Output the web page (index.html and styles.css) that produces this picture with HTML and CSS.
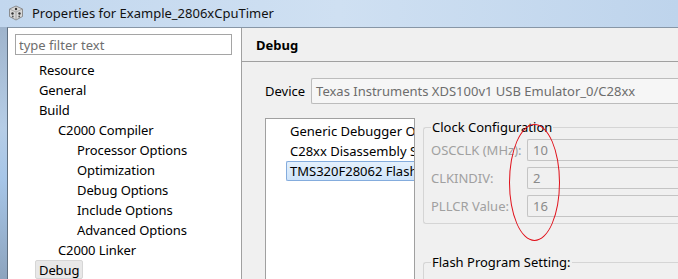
FILE: index.html
```html
<!DOCTYPE html>
<html lang="en">
<head>
    <meta charset="UTF-8">
    <title>Properties for Example_2806xCpuTimer</title>
    <link rel="stylesheet" href="styles.css">
</head>
<body>
    <div class="window">
        <div class="titlebar">
            <svg class="app-icon" width="16" height="16" viewBox="0 0 16 16">
                <path d="M8 1 L14.5 4 L14.5 11.5 L8 15 L1.5 11.5 L1.5 4 Z" fill="#d8d8d8" stroke="#7a7a7a" stroke-width="0.8"/>
                <path d="M1.5 4 L8 7 L14.5 4 M8 7 L8 15" fill="none" stroke="#9a9a9a" stroke-width="0.8"/>
                <circle cx="8" cy="4" r="1.2" fill="#333"/>
                <circle cx="4.5" cy="8.5" r="1.2" fill="#333"/>
                <circle cx="11.5" cy="8.5" r="1.2" fill="#333"/>
                <circle cx="4.8" cy="11.5" r="0.9" fill="#555"/>
                <circle cx="11.2" cy="11.5" r="0.9" fill="#555"/>
            </svg>
            <span class="title">Properties for Example_2806xCpuTimer</span>
        </div>

        <div class="frame">
            <div class="content">
                <!-- left: page tree -->
                <div class="sidebar">
                    <input class="filter" type="text" placeholder="type filter text">
                    <ul class="tree">
                        <li class="lvl1">Resource</li>
                        <li class="lvl1">General</li>
                        <li class="lvl1">Build</li>
                        <li class="lvl2">C2000 Compiler</li>
                        <li class="lvl3">Processor Options</li>
                        <li class="lvl3">Optimization</li>
                        <li class="lvl3">Debug Options</li>
                        <li class="lvl3">Include Options</li>
                        <li class="lvl3">Advanced Options</li>
                        <li class="lvl2">C2000 Linker</li>
                        <li class="lvl1"><span class="selected">Debug</span></li>
                    </ul>
                </div>

                <!-- right: page -->
                <div class="page">
                    <div class="page-header">Debug</div>
                    <div class="page-body">
                        <div class="device-row">
                            <label>Device</label>
                            <div class="device-box">Texas Instruments XDS100v1 USB Emulator_0/C28xx</div>
                        </div>

                        <div class="split">
                            <ul class="category-list">
                                <li>Generic Debugger O</li>
                                <li>C28xx Disassembly S</li>
                                <li class="active">TMS320F28062 Flash</li>
                            </ul>

                            <div class="settings">
                                <fieldset class="group">
                                    <legend>Clock Configuration</legend>
                                    <div class="field-grid">
                                        <span class="field-label">OSCCLK (MHz):</span>
                                        <div class="field-box">10</div>
                                        <span class="field-label">CLKINDIV:</span>
                                        <div class="field-box">2</div>
                                        <span class="field-label">PLLCR Value:</span>
                                        <div class="field-box">16</div>
                                    </div>
                                    <div class="mark"></div>
                                </fieldset>

                                <fieldset class="group flash">
                                    <legend>Flash Program Setting:</legend>
                                </fieldset>
                            </div>
                        </div>
                    </div>
                </div>
            </div>
        </div>
    </div>
</body>
</html>
```

FILE: styles.css
```css
* {
    box-sizing: border-box;
}

body {
    margin: 0;
    width: 678px;
    height: 279px;
    overflow: hidden;
    font-family: "Noto Sans", "Open Sans", sans-serif;
    font-size: 13px;
    color: #000;
}

.window {
    display: flex;
    flex-direction: column;
    height: 279px;
    background: linear-gradient(to bottom, #c9dcf0, #b9d1ea);
}

.titlebar {
    height: 27px;
    flex-shrink: 0;
    display: flex;
    align-items: center;
    padding-left: 8px;
    background: linear-gradient(to right, #c2d7ee 0%, #cfe0f2 50%, #bed4ec 100%);
}

.app-icon {
    margin-right: 8px;
    margin-top: -1px;
}

.title {
    font-size: 13px;
    color: #111;
    margin-top: -2px;
}

.frame {
    flex: 1;
    min-height: 0;
    overflow: hidden;
    display: flex;
    padding-left: 7px;
    background: linear-gradient(to bottom, #9fb4cc 0%, #b6cde6 40%, #a7c6e8 60%, #8da4be 100%);
}

.content {
    flex: 1;
    display: flex;
    align-items: flex-start;
    border-left: 1px solid #5f6f80;
    border-top: 1px solid #8796a6;
    background: #f0f0f0;
}

/* left tree */
.sidebar {
    width: 234px;
    height: 300px;
    flex-shrink: 0;
    background: #fff;
    border-right: 1px solid #a0a0a0;
    padding: 6px 0 0 7px;
}

.filter {
    width: 217px;
    height: 21px;
    border: 1px solid #a5a5a5;
    padding: 0 3px;
    font-family: inherit;
    font-size: 13px;
    outline: none;
}

.filter::placeholder {
    color: #6e6e6e;
}

.tree {
    list-style: none;
    margin: 5px 0 0;
    padding: 0;
}

.tree li {
    height: 20px;
    line-height: 20px;
    white-space: nowrap;
    letter-spacing: -0.1px;
}

.lvl1 { padding-left: 24px; }
.lvl2 { padding-left: 43px; }
.lvl3 { padding-left: 62px; }

.tree .selected {
    display: inline-block;
    margin-left: -4px;
    padding: 0 3px;
    height: 19px;
    line-height: 18px;
    background: #e8e8e8;
    border: 1px solid #d6d6d6;
    border-radius: 2px;
}

/* right page */
.page {
    flex: 1;
    display: flex;
    flex-direction: column;
    min-width: 0;
}

.page-header {
    height: 34px;
    line-height: 34px;
    padding-left: 14px;
    font-weight: bold;
    border-bottom: 1px solid #a0a0a0;
    flex-shrink: 0;
}

.page-body {
    padding: 16px 0 0 23px;
}

.device-row {
    display: flex;
    align-items: center;
    height: 26px;
}

.device-row label {
    margin-right: 6px;
}

.device-box {
    flex: 1;
    height: 26px;
    line-height: 24px;
    padding-left: 4px;
    background: #f6f6f6;
    border: 1px solid #bcbcbc;
    border-right: none;
    border-radius: 2px 0 0 2px;
    color: #6d6d6d;
    white-space: nowrap;
    overflow: hidden;
}

.split {
    display: flex;
    margin-top: 14px;
    gap: 8px;
}

.category-list {
    list-style: none;
    margin: 0;
    padding: 2px 0 0 20px;
    width: 150px;
    height: 170px;
    background: #fff;
    border: 1px solid #a0a0a0;
    flex-shrink: 0;
}

.category-list li {
    height: 20px;
    line-height: 20px;
    padding-left: 4px;
    white-space: nowrap;
    overflow: hidden;
}

.category-list .active {
    background: linear-gradient(to bottom, #e4f0fc, #cfe4fa);
    border: 1px solid #84acdd;
    border-right: none;
    border-radius: 2px 0 0 2px;
    line-height: 18px;
    padding-left: 3px;
}

.settings {
    flex: 1;
    min-width: 0;
}

.group {
    position: relative;
    margin: 0;
    padding: 3px 0 6px 7px;
    border: 1px solid #d5d5d5;
    border-right: none;
    border-radius: 3px 0 0 3px;
}

.group legend {
    padding: 0 1px;
    margin-left: 0;
    line-height: 18px;
    color: #000;
}

.field-grid {
    display: grid;
    grid-template-columns: 96px 1fr;
    grid-auto-rows: 22px;
    row-gap: 6px;
    align-items: center;
}

.field-label {
    color: #a0a0a0;
    white-space: nowrap;
}

.field-box {
    height: 22px;
    line-height: 20px;
    padding-left: 5px;
    background: #f0f0f0;
    border: 1px solid #c4c4c4;
    border-right: none;
    border-radius: 2px 0 0 2px;
    color: #8a8a8a;
}

.flash {
    margin-top: 29px;
    height: 40px;
}

/* red annotation circle drawn over the values */
.mark {
    position: absolute;
    left: 85px;
    top: -12px;
    width: 51px;
    height: 117px;
    border: 1px solid #e0101a;
    border-radius: 50%;
    pointer-events: none;
}
```
